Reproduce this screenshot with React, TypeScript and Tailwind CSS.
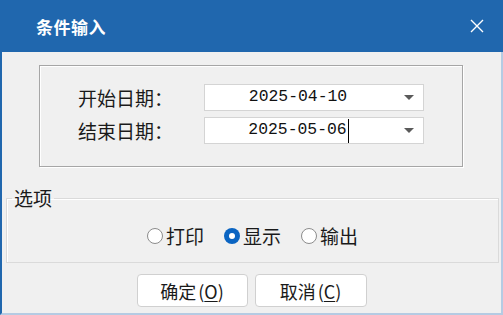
import React from "react";

const cjk = { fontFamily: '"Noto Sans CJK SC", "Microsoft YaHei", sans-serif' };

function Combo({ value, caret }: { value: string; caret?: boolean }) {
  return (
    <div className="flex h-[27px] w-[220px] items-center border border-[#d4d4d4] bg-white">
      <div className="flex flex-1 items-center justify-center text-[16.4px] leading-none text-[#111]" style={{ fontFamily: '"Liberation Mono", monospace' }}>
        <span>{value}</span>
        {caret ? <span className="-mr-px ml-[1px] inline-block h-[24px] w-px bg-black" /> : null}
      </div>
      <div className="flex w-[32px] items-center justify-end pr-[9px]">
        <svg width="10" height="5" viewBox="0 0 10 5">
          <path d="M0 0 L10 0 L5 5 Z" fill="#5a5a5a" />
        </svg>
      </div>
    </div>
  );
}

function Radio({ checked, label }: { checked?: boolean; label: string }) {
  return (
    <div className="flex items-center gap-[3px]">
      {checked ? (
        <span className="flex h-[16px] w-[16px] items-center justify-center rounded-full bg-[#0a64c2]">
          <span className="h-[6px] w-[6px] rounded-full bg-white" />
        </span>
      ) : (
        <span className="h-[16px] w-[16px] rounded-full border border-[#8c8c8c] bg-white" />
      )}
      <span className="text-[19px] leading-[24px] text-[#1a1a1a]">{label}</span>
    </div>
  );
}

export default function App() {
  return (
    <div className="flex h-[315px] w-[503px] flex-col bg-[#f0f0f0]" style={cjk}>
      <div className="flex h-[52px] items-center justify-between bg-[#2067ae] pl-[36px] pr-[19px] text-white">
        <span className="text-[17px] font-bold leading-none tracking-[0.5px]">条件输入</span>
        <svg width="14" height="14" viewBox="0 0 14 14">
          <path d="M1 1 L13 13 M13 1 L1 13" stroke="#ffffff" strokeWidth="1.4" />
        </svg>
      </div>
      <div className="flex flex-1 flex-col border-b-2 border-l-2 border-r-2 border-b-[#b5cbe3] border-l-[#2067ae] border-r-[#b5cbe3]">
        <div className="ml-[37px] mr-[38px] mt-[13px] flex h-[102px] flex-col gap-[6px] border border-[#a6a6a6] pl-[38px] pt-[18px] shadow-[inset_1px_1px_0_#ffffff,1px_1px_0_#ffffff]">
          <div className="flex items-center">
            <span className="w-[126px] text-[19px] leading-[24px] text-[#1a1a1a]">开始日期：</span>
            <Combo value="2025-04-10" />
          </div>
          <div className="flex items-center">
            <span className="w-[126px] text-[19px] leading-[24px] text-[#1a1a1a]">结束日期：</span>
            <Combo value="2025-05-06" caret />
          </div>
        </div>
        <fieldset className="ml-[4px] mr-[2px] mt-[19px] h-[77px] border border-[#dadada] shadow-[inset_1px_1px_0_#ffffff]">
          <legend className="ml-[5px] px-[2px] text-[19px] leading-[24px] text-[#1a1a1a]">选项</legend>
          <div className="flex items-center justify-center gap-[20px] pt-[14px]">
            <Radio label="打印" />
            <Radio checked label="显示" />
            <Radio label="输出" />
          </div>
        </fieldset>
        <div className="mt-[11px] flex justify-center gap-[7px]">
          <button className="flex h-[33px] w-[111px] items-center justify-center rounded-[4px] border border-[#d0d0d0] bg-white text-[18px] leading-none text-[#1a1a1a]">
            确定<span className="ml-[2px]">(<span className="underline underline-offset-2">O</span>)</span>
          </button>
          <button className="flex h-[33px] w-[112px] items-center justify-center rounded-[4px] border border-[#d0d0d0] bg-white text-[18px] leading-none text-[#1a1a1a]">
            取消<span className="ml-[2px]">(<span className="underline underline-offset-2">C</span>)</span>
          </button>
        </div>
      </div>
    </div>
  );
}
